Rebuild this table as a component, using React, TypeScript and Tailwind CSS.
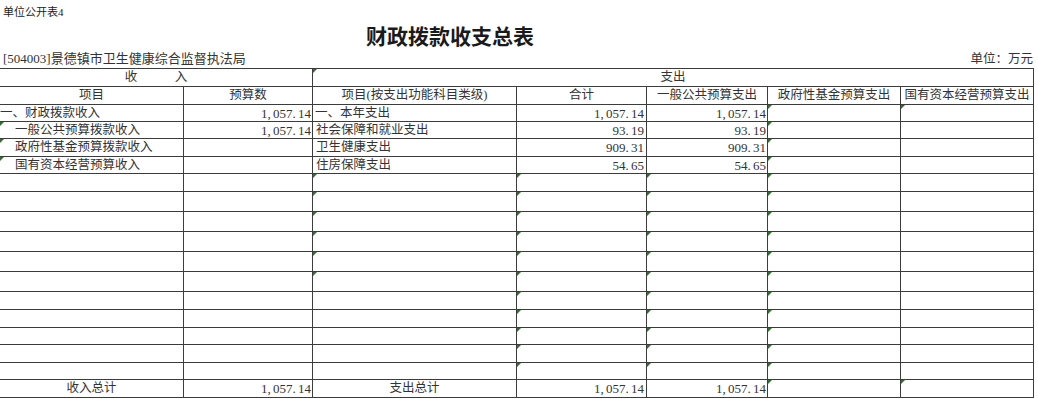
import React from "react";

const FONT = '"Liberation Serif", "Noto Sans CJK SC", serif';

type Cell = {
  t?: string;
  num?: boolean;
  align?: "l" | "c" | "r";
  pl?: string;
  pr?: string;
  tri?: boolean;
};

function Num({ v }: { v: string }) {
  return (
    <span className="whitespace-nowrap text-[13px]">
      {v.split("").map((ch, i) =>
        ch === "," || ch === "." ? (
          <span key={i} className="inline-block w-[5.5px]">
            {ch}
          </span>
        ) : (
          <span key={i}>{ch}</span>
        )
      )}
    </span>
  );
}

function Tri() {
  return (
    <span className="absolute left-0 top-0 h-0 w-0 border-t-[4px] border-r-[4px] border-t-[#2f6f2f] border-r-transparent" />
  );
}

const E: Cell = {};

const emptyRowA: Cell[] = [
  E,
  E,
  { tri: true },
  { tri: true },
  { tri: true },
  { tri: true },
  E,
];
const emptyRowB: Cell[] = [E, E, E, { tri: true }, { tri: true }, { tri: true }, E];

const rows: Cell[][] = [
  [
    { t: "一、财政拨款收入", align: "l", pl: "pl-0" },
    { t: "1,057.14", num: true, align: "r", pr: "pr-[1px]" },
    { t: "一、本年支出", align: "l", pl: "pl-[2px]" },
    { t: "1,057.14", num: true, align: "r", pr: "pr-[2px]" },
    { t: "1,057.14", num: true, align: "r", pr: "pr-[1px]" },
    { tri: true },
    { tri: true },
  ],
  [
    { t: "一般公共预算拨款收入", align: "l", pl: "pl-[15px]", tri: true },
    { t: "1,057.14", num: true, align: "r", pr: "pr-[1px]" },
    { t: "社会保障和就业支出", align: "l", pl: "pl-[3px]" },
    { t: "93.19", num: true, align: "r", pr: "pr-[2px]" },
    { t: "93.19", num: true, align: "r", pr: "pr-[1px]" },
    { tri: true },
    E,
  ],
  [
    { t: "政府性基金预算拨款收入", align: "l", pl: "pl-[15px]", tri: true },
    E,
    { t: "卫生健康支出", align: "l", pl: "pl-[3px]" },
    { t: "909.31", num: true, align: "r", pr: "pr-[2px]" },
    { t: "909.31", num: true, align: "r", pr: "pr-[1px]" },
    { tri: true },
    E,
  ],
  [
    { t: "国有资本经营预算收入", align: "l", pl: "pl-[15px]", tri: true },
    E,
    { t: "住房保障支出", align: "l", pl: "pl-[3px]" },
    { t: "54.65", num: true, align: "r", pr: "pr-[2px]" },
    { t: "54.65", num: true, align: "r", pr: "pr-[1px]" },
    { tri: true },
    E,
  ],
  emptyRowA,
  emptyRowA,
  emptyRowA,
  emptyRowA,
  emptyRowA,
  emptyRowA,
  emptyRowB,
  emptyRowB,
  emptyRowB,
  emptyRowB,
  emptyRowB,
  [
    { t: "收入总计", align: "c" },
    { t: "1,057.14", num: true, align: "r", pr: "pr-[1px]" },
    { t: "支出总计", align: "c" },
    { t: "1,057.14", num: true, align: "r", pr: "pr-[2px]" },
    { t: "1,057.14", num: true, align: "r", pr: "pr-[1px]" },
    { tri: true },
    { tri: true },
  ],
];

const headers = [
  "项目",
  "预算数",
  "项目(按支出功能科目类级)",
  "合计",
  "一般公共预算支出",
  "政府性基金预算支出",
  "国有资本经营预算支出",
];

const cellBase =
  "relative flex items-center overflow-hidden whitespace-nowrap border-r border-b border-[#3c3c3c]";

export default function App() {
  return (
    <div
      className="flex h-[399px] w-[1038px] flex-col overflow-hidden bg-white text-[#333333]"
      style={{ fontFamily: FONT }}
    >
      <div className="flex h-[24px] items-center pl-[3px] pt-[1px] text-[11px] text-[#222222]">
        单位公开表4
      </div>
      <div className="flex h-[26px] items-center pl-[366px] text-[21px] font-bold leading-none text-[#1a1a1a]">
        财政拨款收支总表
      </div>
      <div className="flex h-[18px] items-center justify-between pl-[3px] pr-[5px]">
        <span className="text-[13px]">[504003]景德镇市卫生健康综合监督执法局</span>
        <span className="text-[12.5px]">单位：万元</span>
      </div>
      <div className="grid w-[1034px] grid-cols-[184px_129px_204px_130px_121px_133px_133px] grid-rows-[18px_18px_17px_17px_18px_17px_18px_20px_20px_20px_20px_20px_18px_18px_17px_18px_17px_18px] border-t border-[#3c3c3c] text-[12.5px] leading-none">
        <div className={`${cellBase} col-span-2 justify-center`}>收　　　入</div>
        <div className={`${cellBase} col-span-5 justify-center`}>
          <Tri />
          支出
        </div>
        {headers.map((h, i) => (
          <div key={i} className={`${cellBase} justify-center`}>
            {h}
          </div>
        ))}
        {rows.map((r, ri) =>
          r.map((c, ci) => {
            const align =
              c.align === "r"
                ? "justify-end"
                : c.align === "c"
                ? "justify-center"
                : "justify-start";
            return (
              <div
                key={`${ri}-${ci}`}
                className={`${cellBase} ${align} ${c.pl ?? ""} ${c.pr ?? ""}`}
              >
                {c.tri ? <Tri /> : null}
                {c.t ? c.num ? <Num v={c.t} /> : c.t : null}
              </div>
            );
          })
        )}
      </div>
    </div>
  );
}
